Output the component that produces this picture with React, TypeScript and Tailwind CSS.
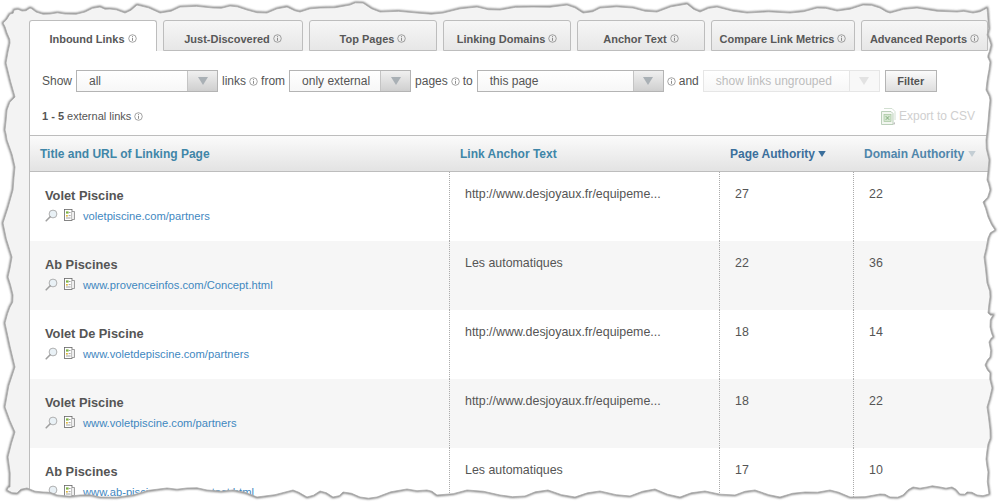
import type { ReactNode } from "react";

const tabs = [
  { label: "Inbound Links", width: "w-[128px]", active: true },
  { label: "Just-Discovered", width: "w-[140px]" },
  { label: "Top Pages", width: "w-[128px]" },
  { label: "Linking Domains", width: "w-[128px]" },
  { label: "Anchor Text", width: "w-[128px]" },
  { label: "Compare Link Metrics", width: "w-[144px]" },
  { label: "Advanced Reports", width: "w-[127px]" },
];

const rows = [
  { title: "Volet Piscine", url: "voletpiscine.com/partners", anchor: "http://www.desjoyaux.fr/equipeme...", pa: 27, da: 22 },
  { title: "Ab Piscines", url: "www.provenceinfos.com/Concept.html", anchor: "Les automatiques", pa: 22, da: 36 },
  { title: "Volet De Piscine", url: "www.voletdepiscine.com/partners", anchor: "http://www.desjoyaux.fr/equipeme...", pa: 18, da: 14 },
  { title: "Volet Piscine", url: "www.voletpiscine.com/partners", anchor: "http://www.desjoyaux.fr/equipeme...", pa: 18, da: 22 },
  { title: "Ab Piscines", url: "www.ab-piscines.com/contact.html", anchor: "Les automatiques", pa: 17, da: 10 },
];

// traced outline of the torn paper edge, clockwise from the top left
const tear = [
  [10, 14], [14, 10], [22, 11], [30, 8], [36, 12], [50, 14], [65, 14], [85, 12], [100, 7], [110, 9], [125, 13], [137, 5], [160, 13],
  [180, 7], [213, 8], [230, 6], [247, 10], [267, 13], [287, 7], [300, 12], [320, 8], [350, 5], [363, 3], [380, 12], [417, 13], [443, 13],
  [477, 7], [500, 10], [533, 7], [567, 5], [583, 13], [600, 8], [633, 8], [657, 12], [687, 4], [700, 12], [717, 7], [747, 13], [790, 13],
  [817, 8], [837, 11], [863, 5], [880, 8], [890, 13], [917, 8], [957, 12], [973, 13], [987, 8],
  [988, 20], [987, 35], [991, 45], [988, 55], [990, 62], [988, 75], [986, 90], [990, 100], [988, 122], [986, 140], [989, 160], [987, 180],
  [990, 190], [983, 202], [988, 217], [995, 230], [988, 238], [984, 257], [987, 283], [990, 297], [988, 313], [993, 315], [990, 327],
  [993, 337], [989, 342], [990, 357], [985, 365], [990, 373], [992, 388], [987, 407], [990, 430], [988, 444], [986, 459], [988, 472], [989, 494],
  [977, 495], [967, 492], [960, 494], [952, 487], [940, 487], [927, 487], [913, 487], [903, 495], [890, 497], [880, 494], [850, 497],
  [830, 490], [805, 492], [780, 497], [755, 490], [735, 495], [705, 491], [680, 497], [655, 489], [630, 496], [600, 491], [575, 497],
  [548, 490], [525, 496], [500, 495], [467, 490], [437, 495], [427, 490], [407, 489], [377, 497], [360, 497], [343, 492], [333, 497],
  [320, 491], [307, 497], [293, 490], [257, 497], [233, 490], [207, 490], [187, 488], [167, 488], [133, 495], [100, 497], [80, 495],
  [57, 495], [43, 492], [27, 488], [17, 493], [7, 490], [10, 487], [8, 457], [15, 432], [5, 407], [15, 367], [5, 323], [10, 307], [13, 295],
  [8, 277], [12, 257], [3, 223], [13, 190], [15, 167], [7, 140], [5, 130], [7, 110], [15, 97], [6, 63], [10, 43], [7, 33], [3, 23],
];

const tearPath =
  tear
    .map(([x, y], i) => {
      const [nx, ny] = tear[(i + 1) % tear.length];
      const wob = i % 2 === 0 ? 1.2 : -1.2;
      return `${i === 0 ? "M" : "L"}${x} ${y} L${(x + nx) / 2 + (i % 3 === 0 ? wob : 0)} ${(y + ny) / 2 + wob}`;
    })
    .join(" ") + " Z";

function Info({ className = "" }: { className?: string }) {
  return (
    <svg viewBox="0 0 10 10" className={`w-[9px] h-[9px] shrink-0 ${className}`} fill="none" stroke="#808080">
      <circle cx="5" cy="5" r="4.2" strokeWidth="0.8" />
      <path d="M5 4.2V7.6M5 2.2V3.2" strokeWidth="1" />
    </svg>
  );
}

function Caret({ color, small }: { color: string; small?: boolean }) {
  return (
    <svg viewBox="0 0 10 8" className={small ? "w-[8px] h-[6px]" : "w-[10px] h-[8px]"}>
      <path d="M0 0H10L5 8Z" fill={color} />
    </svg>
  );
}

function Select({ value, width, disabled }: { value: string; width: string; disabled?: boolean }) {
  return (
    <div className={`flex h-[22px] shrink-0 border ${width} ${disabled ? "border-[#e6e6e6] text-[#bdbdbd]" : "border-[#b4b4b4] text-[#555]"}`}>
      <div className="flex-1 pl-[12px] leading-[21px] bg-gradient-to-b from-white to-[#f7f7f7]">{value}</div>
      <div className={`w-[30px] flex items-center justify-center border-l ${disabled ? "border-[#e6e6e6] bg-[#f8f8f8]" : "border-[#c4c4c4] bg-gradient-to-b from-[#f0f0f0] to-[#cfcfcf]"}`}>
        <Caret color={disabled ? "#e2e2e2" : "#a9b0b5"} />
      </div>
    </div>
  );
}

function Magnifier() {
  return (
    <svg viewBox="0 0 13 13" className="w-[13px] h-[13px] shrink-0 -mt-[2px]">
      <circle cx="8" cy="5" r="3.9" fill="#e9f1f6" stroke="#a8a8a8" strokeWidth="0.9" />
      <path d="M5.2 7.8L1.2 11.8" stroke="#a0a0a0" strokeWidth="1.6" strokeLinecap="round" />
    </svg>
  );
}

function PageIcon() {
  return (
    <svg viewBox="0 0 11 12" className="w-[11px] h-[12px] shrink-0 -mt-[2px]">
      <rect x="0.5" y="0.5" width="7.5" height="11" fill="#fff" stroke="#666" strokeWidth="0.8" />
      <path d="M8 2.5H10.5V10.5H8" fill="#eee" stroke="#888" strokeWidth="0.8" />
      <rect x="2" y="2.4" width="2.6" height="2.2" fill="#7cb342" />
      <rect x="2" y="6" width="1.8" height="1.6" fill="#e0b93a" />
      <path d="M5 3.5H6.6M4.6 6.6H6.6M2 9H6.6" stroke="#777" strokeWidth="0.7" />
    </svg>
  );
}

function ExportIcon() {
  return (
    <svg viewBox="0 0 15 17" className="w-[15px] h-[17px] shrink-0">
      <path d="M0.5 3.5H10L12 5.5V16.5H0.5Z" fill="#f2f6f0" stroke="#bcd0bb" />
      <path d="M3 0.5H11L14 3.5V12" fill="none" stroke="#d2dfd1" />
      <rect x="3" y="6.5" width="7" height="7" fill="#d5e6d1" stroke="#a5c59e" strokeWidth="0.7" />
      <path d="M4.8 8.2L8.2 11.8M8.2 8.2L4.8 11.8" stroke="#79a874" strokeWidth="0.9" />
      <path d="M13.4 14.5L13 16.5" stroke="#9a9a9a" strokeWidth="0.9" />
    </svg>
  );
}

function Cell({ children, className = "" }: { children: ReactNode; className?: string }) {
  return <div className={`border-l border-dotted border-[#aaaaaa] pl-[15px] pt-[14px] leading-[16px] text-[12.4px] text-[#555] ${className}`}>{children}</div>;
}

export default function App() {
  return (
    <div className="relative w-[999px] h-[502px] overflow-hidden bg-[#f3f3f3] pt-[20px] pl-[29px] font-['Liberation_Sans',Arial,sans-serif]">
      {/* tabs */}
      <div className="flex gap-[6px] h-[31px]">
        {tabs.map((t) => (
          <div
            key={t.label}
            className={`flex items-center justify-center gap-[3px] pt-[7px] shrink-0 rounded-t-[3px] border border-[#bdbdbd] text-[11px] font-bold text-[#585858] ${t.width} ${
              t.active ? "border-b-0 bg-white" : "bg-gradient-to-b from-[#f6f6f6] to-[#e7e7e7]"
            }`}
          >
            {t.label}
            <Info className="-mt-[2px]" />
          </div>
        ))}
      </div>

      {/* main panel */}
      <div className="w-[970px] border-l border-[#bdbdbd] bg-white">
        <div className="flex items-center gap-[4px] pl-[12px] pt-[19px] text-[12px] text-[#555]">
          <span>Show</span>
          <Select value="all" width="w-[142px]" />
          <span>links</span>
          <Info className="-mx-px" />
          <span>from</span>
          <Select value="only external" width="w-[122px]" />
          <span>pages</span>
          <Info className="-mx-px" />
          <span>to</span>
          <Select value="this page" width="w-[187px]" />
          <Info className="-mx-px" />
          <span>and</span>
          <Select value="show links ungrouped" width="w-[177px]" disabled />
          <button className="ml-px w-[52px] h-[22px] border border-[#b4b4b4] bg-gradient-to-b from-[#fbfbfb] to-[#dedede] text-[11px] font-bold text-[#555]">Filter</button>
        </div>

        <div className="flex items-center justify-between w-[945px] h-[22px] mt-[13px] pl-[12px]">
          <div className="flex items-center gap-[3px] text-[11px] text-[#555]">
            <span>
              <b>1 - 5</b> external links
            </span>
            <Info />
          </div>
          <div className="flex items-center gap-[3px] text-[12px] text-[#cfcfcf]">
            <ExportIcon />
            Export to CSV
          </div>
        </div>

        {/* table head */}
        <div className="grid grid-cols-[419px_270px_134px_135px] h-[37px] mt-[8px] border-y border-[#bdbdbd] bg-gradient-to-b from-[#fbfbfb] to-[#e3e3e3] items-center text-[12px] font-bold text-[#3f86a8]">
          <div className="pl-[10px]">Title and URL of Linking Page</div>
          <div className="pl-[11px]">Link Anchor Text</div>
          <div className="pl-[11px] flex items-center gap-[3px] text-[#3b6f9c]">
            Page Authority
            <Caret color="#3b6f9c" small />
          </div>
          <div className="pl-[11px] flex items-center gap-[4px] text-[#4f86ab]">
            Domain Authority
            <Caret color="#c4ced4" small />
          </div>
        </div>

        {/* rows */}
        {rows.map((r, i) => (
          <div key={i} className={`grid grid-cols-[419px_270px_134px_135px] h-[69px] ${i % 2 === 1 ? "bg-[#f6f6f6]" : "bg-white"}`}>
            <div className="pl-[15px] pt-[15px]">
              <div className="text-[12.8px] leading-[17px] font-bold text-[#555]">{r.title}</div>
              <div className="flex items-center h-[14px] mt-[5px] text-[11.2px] text-[#3f88bf]">
                <Magnifier />
                <span className="ml-[6px]">
                  <PageIcon />
                </span>
                <span className="ml-[8px]">{r.url}</span>
              </div>
            </div>
            <Cell>{r.anchor}</Cell>
            <Cell>{r.pa}</Cell>
            <Cell>{r.da}</Cell>
          </div>
        ))}
      </div>

      {/* torn paper edge */}
      <svg viewBox="0 0 999 502" className="absolute inset-0 w-[999px] h-[502px] pointer-events-none">
        <defs>
          <filter id="soft" x="-5%" y="-5%" width="110%" height="110%">
            <feGaussianBlur stdDeviation="1.3" />
          </filter>
          <mask id="outside">
            <rect width="999" height="502" fill="#fff" />
            <path d={tearPath} fill="#000" />
          </mask>
        </defs>
        <path fillRule="evenodd" d={`M0 0H999V502H0Z ${tearPath}`} fill="#fff" />
        <g mask="url(#outside)">
          <path d={tearPath} fill="none" stroke="#666" strokeWidth="2.2" filter="url(#soft)" />
        </g>
        <path d={tearPath} fill="none" stroke="#a8a8a8" strokeWidth="0.8" />
      </svg>
    </div>
  );
}
